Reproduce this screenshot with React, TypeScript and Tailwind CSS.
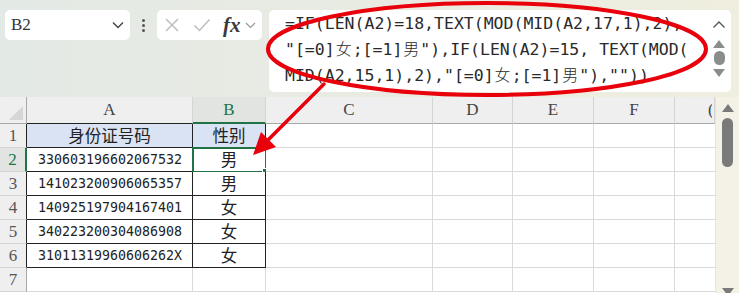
import React from "react";

const CJK = ({ c }: { c: string }) => (
  <span className="inline-block w-[18px] text-center font-['Noto_Sans_CJK_SC',sans-serif] font-light text-[16px]">
    {c}
  </span>
);

const colWidths = ["w-[166px]", "w-[73px]", "w-[167px]", "w-[80px]", "w-[81px]", "w-[81px]", "w-[40px]"];
const colLetters = ["A", "B", "C", "D", "E", "F", "G"];

const data: [string, string][] = [
  ["身份证号码", "性别"],
  ["330603196602067532", "男"],
  ["141023200906065357", "男"],
  ["140925197904167401", "女"],
  ["340223200304086908", "女"],
  ["31011319960606262X", "女"],
];

function HeaderRow() {
  return (
    <div className="flex h-[27px]">
      <div className="relative w-[27px] h-[27px] bg-[#efefef] border-r border-b border-[#a8a8a8]">
        <svg className="absolute right-[3px] bottom-[3px]" width="14" height="14" viewBox="0 0 14 14">
          <polygon points="14,0 14,14 0,14" fill="#d6d6d6" />
        </svg>
      </div>
      {colLetters.map((l, i) => {
        const sel = i === 1;
        const tbl = i === 0;
        return (
          <div
            key={l}
            className={`${colWidths[i]} h-[27px] flex items-center border-r border-[#d4d4d4] font-['Liberation_Serif',serif] text-[17px] ${
              sel
                ? "bg-[#e2e4e2] text-[#217346] border-b-2 border-b-[#217346]"
                : tbl
                ? "bg-[#efefef] text-[#444] border-b border-b-[#222]"
                : "bg-[#efefef] text-[#444] border-b border-b-[#a8a8a8]"
            } ${i === 6 ? "justify-end" : "justify-center"}`}
          >
            {i === 6 ? (
              <span className="w-[4px] overflow-hidden mr-[2px]">
                <span className="block">(</span>
              </span>
            ) : (
              l
            )}
          </div>
        );
      })}
    </div>
  );
}

function Row({ r }: { r: number }) {
  const inTable = r <= 6;
  const sel = r === 2;
  const d = inTable ? data[r - 1] : null;
  return (
    <div className="flex h-[24px]">
      <div
        className={`w-[27px] h-[24px] flex items-center justify-center font-['Liberation_Serif',serif] text-[17px] border-b border-b-[#d4d4d4] ${
          sel
            ? "bg-[#e2e4e2] text-[#217346] border-r-2 border-r-[#217346]"
            : inTable
            ? "bg-[#efefef] text-[#555] border-r border-r-[#222]"
            : "bg-[#efefef] text-[#555] border-r border-r-[#a8a8a8]"
        }`}
      >
        {r}
      </div>
      {colWidths.map((w, i) => {
        const isTbl = inTable && i < 2;
        const border = isTbl
          ? "border-r border-b border-[#222]"
          : i === 6
          ? "border-b border-[#dadada]"
          : "border-r border-b border-[#dadada]";
        const bg = r === 1 && i < 2 ? "bg-[#dae3f3]" : "bg-white";
        let content: React.ReactNode = null;
        if (d && i === 0) {
          content =
            r === 1 ? (
              <span className="font-['Noto_Sans_CJK_SC',sans-serif] text-[16.5px] text-[#222]">{d[0]}</span>
            ) : (
              <span className="font-['DejaVu_Sans_Mono',monospace] text-[13.3px] text-[#222] pl-[1px]">{d[0]}</span>
            );
        }
        if (d && i === 1) {
          content = <span className="font-['Noto_Sans_CJK_SC',sans-serif] text-[16.5px] text-[#222]">{d[1]}</span>;
        }
        return (
          <div key={i} className={`relative ${w} h-[24px] flex items-center justify-center ${border} ${bg}`}>
            {content}
            {sel && i === 1 && (
              <>
                <div className="absolute -left-[1px] -top-[1px] w-[75px] h-[26px] border-2 border-[#217346]" />
                <div className="absolute -right-[3px] -bottom-[3px] w-[6px] h-[6px] bg-[#217346] border border-white" />
              </>
            )}
          </div>
        );
      })}
    </div>
  );
}

export default function App() {
  return (
    <div className="relative w-[739px] h-[293px] overflow-hidden bg-white">
      {/* Top toolbar area */}
      <div className="h-[97px] bg-gradient-to-r from-[#e3e9e5] to-[#efeedf] flex items-start pt-[10px] pl-[5px]">
        {/* Name box */}
        <div className="w-[125px] h-[30px] bg-white rounded-[5px] flex items-center justify-between pl-[6px] pr-[6px]">
          <span className="font-['Liberation_Serif',serif] text-[17px] text-[#333]">B2</span>
          <svg width="12" height="8" viewBox="0 0 12 8">
            <path d="M1 1.5 L6 6.5 L11 1.5" stroke="#444" strokeWidth="1.4" fill="none" />
          </svg>
        </div>
        {/* dots */}
        <div className="w-[27px] h-[30px] flex flex-col items-center justify-center gap-[2px]">
          <div className="w-[3px] h-[3px] rounded-full bg-[#555]" />
          <div className="w-[3px] h-[3px] rounded-full bg-[#555]" />
          <div className="w-[3px] h-[3px] rounded-full bg-[#555]" />
        </div>
        {/* fx box */}
        <div className="w-[105px] h-[30px] bg-white rounded-[5px] flex items-center pl-[7px]">
          <svg width="16" height="16" viewBox="0 0 16 16">
            <path d="M2 2 L14 14 M14 2 L2 14" stroke="#bdbdbd" strokeWidth="1.5" fill="none" />
          </svg>
          <svg className="ml-[13px]" width="18" height="16" viewBox="0 0 18 16">
            <path d="M1.5 8.5 L6.5 13.5 L16.5 2.5" stroke="#bdbdbd" strokeWidth="1.5" fill="none" />
          </svg>
          <span className="ml-[12px] font-['Liberation_Serif',serif] italic font-bold text-[21px] leading-none text-[#3a3a3a]">
            fx
          </span>
          <svg className="ml-[4px]" width="11" height="7" viewBox="0 0 11 7">
            <path d="M1 1 L5.5 5.5 L10 1" stroke="#999" strokeWidth="1.2" fill="none" />
          </svg>
        </div>
        {/* Formula bar */}
        <div className="ml-[7px] w-[462px] h-[82px] bg-white rounded-[5px] flex">
          <div className="flex-1 pl-[16px] pt-[1px] font-['DejaVu_Sans_Mono',monospace] text-[16.5px] leading-[25px] text-[#2a2a2a] whitespace-pre">
            <div>=IF(LEN(A2)=18,TEXT(MOD(MID(A2,17,1),2),</div>
            <div>
              "[=0]<CJK c="女" />;[=1]<CJK c="男" />"),IF(LEN(A2)=15, TEXT(MOD(
            </div>
            <div>
              MID(A2,15,1),2),"[=0]<CJK c="女" />;[=1]<CJK c="男" />"),""))
            </div>
          </div>
          <div className="w-[24px] flex flex-col items-center pt-[10px]">
            <svg width="14" height="9" viewBox="0 0 14 9">
              <path d="M1.5 7.5 L7 2 L12.5 7.5" stroke="#555" strokeWidth="1.4" fill="none" />
            </svg>
            <svg className="mt-[11px]" width="12" height="8" viewBox="0 0 12 8">
              <polygon points="6,0 12,8 0,8" fill="#8c8c8c" />
            </svg>
            <div className="mt-[3px] w-[11px] h-[14px] rounded-full bg-[#8c8c8c]" />
            <svg className="mt-[4px]" width="12" height="8" viewBox="0 0 12 8">
              <polygon points="0,0 12,0 6,8" fill="#8c8c8c" />
            </svg>
          </div>
        </div>
      </div>

      {/* Grid */}
      <div className="flex">
        <div className="w-[715px]">
          <HeaderRow />
          {[1, 2, 3, 4, 5, 6, 7].map((r) => (
            <Row key={r} r={r} />
          ))}
        </div>
        <div className="w-[24px] h-[196px] bg-[#f4f2e6] border-l border-[#e8e6d6] flex flex-col items-center pt-[7px]">
          <svg width="12" height="8" viewBox="0 0 12 8">
            <polygon points="6,0 12,8 0,8" fill="#7a7a7a" />
          </svg>
          <div className="mt-[6px] w-[11px] h-[49px] rounded-full bg-[#7a7a7a]" />
          <div className="flex-1" />
          <svg className="mb-[-3px]" width="12" height="8" viewBox="0 0 12 8">
            <polygon points="0,0 12,0 6,8" fill="#7a7a7a" />
          </svg>
        </div>
      </div>

      {/* Annotation overlay */}
      <svg className="absolute left-0 top-0 pointer-events-none" width="739" height="293" viewBox="0 0 739 293">
        <ellipse cx="487" cy="49" rx="219" ry="46" fill="none" stroke="#e8000b" strokeWidth="4" />
        <line x1="324" y1="84" x2="266" y2="142" stroke="#e8000b" strokeWidth="3.5" strokeLinecap="round" />
        <polygon points="253,155 261,132 276,147" fill="#e8000b" />
      </svg>
    </div>
  );
}
